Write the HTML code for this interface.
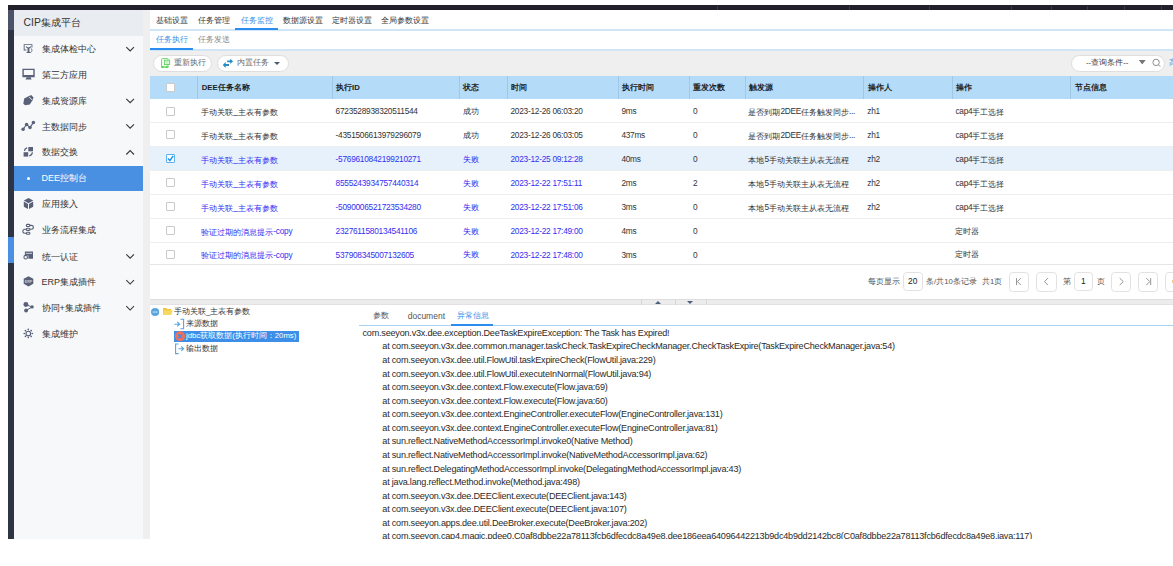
<!DOCTYPE html>
<html><head><meta charset="utf-8"><style>
*{margin:0;padding:0;box-sizing:border-box}
html,body{width:1173px;height:566px;overflow:hidden;background:#fff;font-family:"Liberation Sans",sans-serif;color:#333}
.a{position:absolute;white-space:nowrap}
.si{font-size:9px;line-height:12px;color:#333;left:41.6px}
.chev{left:127px;width:6px;height:6px;border-right:1.2px solid #555;border-bottom:1.2px solid #555;transform:rotate(45deg)}
.chevu{transform:rotate(-135deg)}
.t{font-size:7.75px;line-height:10px;color:#333}
.hd{font-size:7.75px;line-height:10px;color:#222;font-weight:bold}
.L{font-size:8.3px;letter-spacing:-0.26px;position:relative;top:-0.9px}
.cb{width:9px;height:9px;border:1px solid #c9c9c9;background:#fff;border-radius:1px}
.bl{color:#3030f2}
.ex{font-size:9.1px;letter-spacing:-0.22px;line-height:13.57px;color:#2a2a2a}
svg{position:absolute;overflow:visible}
</style></head><body>
<div class="a" style="left:8px;top:5px;width:1165px;height:5px;background:#21202b"></div>
<div class="a" style="left:717px;top:6px;width:1px;height:4px;background:#3a3a46"></div>
<div class="a" style="left:849px;top:6px;width:1px;height:4px;background:#3a3a46"></div>
<div class="a" style="left:929px;top:6px;width:1px;height:4px;background:#3a3a46"></div>
<div class="a" style="left:1011px;top:6px;width:1px;height:4px;background:#3a3a46"></div>
<div class="a" style="left:1051px;top:6px;width:1px;height:4px;background:#3a3a46"></div>
<div class="a" style="left:1087px;top:6px;width:1px;height:4px;background:#3a3a46"></div>
<div class="a" style="left:1124px;top:6px;width:1px;height:4px;background:#3a3a46"></div>
<div class="a" style="left:1161px;top:6px;width:1px;height:4px;background:#3a3a46"></div>
<div class="a" style="left:8px;top:10px;width:6px;height:529px;background:#2f3444"></div>
<div class="a" style="left:8px;top:10px;width:6px;height:20px;background:#4c5268"></div>
<div class="a" style="left:8px;top:237px;width:6px;height:26px;background:#4a8fe2"></div>
<div class="a" style="left:14px;top:10px;width:129px;height:529px;background:#f7f8fa"></div>
<div class="a" style="left:14px;top:10px;width:129px;height:26px;background:#e9ecf0"></div>
<div class="a" style="left:142.6px;top:10px;width:7.4px;height:529px;background:#efefef"></div>
<div class="a" style="left:23.5px;top:16px;font-size:10.4px;line-height:14px;color:#333">CIP集成平台</div>
<div class="a" style="left:14px;top:165.7px;width:128.6px;height:25.4px;background:#4a90e2"></div>
<div class="a" style="left:27.2px;top:176.6px;width:3px;height:3px;border-radius:50%;background:#fff"></div>
<div class="a si" style="top:43.3px">集成体检中心</div>
<div class="a si" style="top:69.2px">第三方应用</div>
<div class="a si" style="top:95.1px">集成资源库</div>
<div class="a si" style="top:120.6px">主数据同步</div>
<div class="a si" style="top:146.1px">数据交换</div>
<div class="a si" style="top:172.1px;color:#fff">DEE控制台</div>
<div class="a si" style="top:198.1px">应用接入</div>
<div class="a si" style="top:224.4px">业务流程集成</div>
<div class="a si" style="top:250.6px">统一认证</div>
<div class="a si" style="top:276.4px">ERP集成插件</div>
<div class="a si" style="top:302.4px">协同+集成插件</div>
<div class="a si" style="top:328.1px">集成维护</div>
<div class="a" style="left:150px;top:10px;width:1023px;height:40px;background:#fff"></div>
<div class="a" style="left:150px;top:29px;width:1023px;height:1.5px;background:#cfe5f8"></div>
<div class="a" style="left:235px;top:28px;width:43px;height:2px;background:#2d8cf0"></div>
<div class="a t" style="left:155.5px;top:16px">基础设置</div>
<div class="a t" style="left:198px;top:16px">任务管理</div>
<div class="a t" style="left:241px;top:16px;color:#3a8ee6">任务监控</div>
<div class="a t" style="left:283px;top:16px">数据源设置</div>
<div class="a t" style="left:332px;top:16px">定时器设置</div>
<div class="a t" style="left:381px;top:16px">全局参数设置</div>
<div class="a" style="left:150px;top:49px;width:1023px;height:1.5px;background:#cfe5f8"></div>
<div class="a" style="left:150px;top:48px;width:43px;height:2px;background:#2d8cf0"></div>
<div class="a t" style="left:155.5px;top:35px;color:#3a8ee6">任务执行</div>
<div class="a t" style="left:198px;top:35px;color:#8a8a8a">任务发送</div>
<div class="a" style="left:150px;top:50.5px;width:1023px;height:25.5px;background:#efefef"></div>
<div class="a" style="left:153.3px;top:55.3px;width:59px;height:16.3px;border:1px solid #dedede;border-radius:9px;background:#fff"></div>
<div class="a t" style="left:174px;top:58px;color:#666">重新执行</div>
<div class="a" style="left:216.5px;top:55.3px;width:72.3px;height:16.3px;border:1px solid #dedede;border-radius:9px;background:#fff"></div>
<div class="a t" style="left:237px;top:58px;color:#666">内置任务</div>
<div class="a" style="left:274px;top:62px;width:0;height:0;border-left:3px solid transparent;border-right:3px solid transparent;border-top:3.5px solid #4a5a70"></div>
<div class="a" style="left:1071px;top:55.3px;width:94.2px;height:16.3px;border:1px solid #dedede;border-radius:9px;background:#fff"></div>
<div class="a t" style="left:1086px;top:58px;color:#3a3a3a">--查询条件--</div>
<div class="a" style="left:1139px;top:60px;width:0;height:0;border-left:3.5px solid transparent;border-right:3.5px solid transparent;border-top:4.5px solid #777"></div>
<div class="a t" style="left:1168.8px;top:58px;color:#3a8ee6;font-size:8.2px">高</div>
<div class="a" style="left:150px;top:76px;width:1023px;height:23.3px;background:#b4dbf8"></div>
<div class="a" style="left:197.4px;top:76px;width:1px;height:23px;background:#9fc7e6"></div>
<div class="a" style="left:331.7px;top:76px;width:1px;height:23px;background:#9fc7e6"></div>
<div class="a" style="left:458.6px;top:76px;width:1px;height:23px;background:#9fc7e6"></div>
<div class="a" style="left:506.6px;top:76px;width:1px;height:23px;background:#9fc7e6"></div>
<div class="a" style="left:617.5px;top:76px;width:1px;height:23px;background:#9fc7e6"></div>
<div class="a" style="left:689px;top:76px;width:1px;height:23px;background:#9fc7e6"></div>
<div class="a" style="left:744.5px;top:76px;width:1px;height:23px;background:#9fc7e6"></div>
<div class="a" style="left:863.4px;top:76px;width:1px;height:23px;background:#9fc7e6"></div>
<div class="a" style="left:951.5px;top:76px;width:1px;height:23px;background:#9fc7e6"></div>
<div class="a" style="left:1070.4px;top:76px;width:1px;height:23px;background:#9fc7e6"></div>
<div class="a cb" style="left:166px;top:82.5px"></div>
<div class="a hd" style="left:201.7px;top:82.5px">DEE任务名称</div>
<div class="a hd" style="left:336.0px;top:82.5px">执行ID</div>
<div class="a hd" style="left:462.9px;top:82.5px">状态</div>
<div class="a hd" style="left:510.9px;top:82.5px">时间</div>
<div class="a hd" style="left:621.8px;top:82.5px">执行时间</div>
<div class="a hd" style="left:693.3px;top:82.5px">重发次数</div>
<div class="a hd" style="left:748.8px;top:82.5px">触发源</div>
<div class="a hd" style="left:867.7px;top:82.5px">操作人</div>
<div class="a hd" style="left:955.8px;top:82.5px">操作</div>
<div class="a hd" style="left:1074.7px;top:82.5px">节点信息</div>
<div class="a" style="left:150px;top:122.20px;width:1023px;height:1px;background:#eeeeee"></div>
<div class="a cb" style="left:166px;top:106.55px"></div>
<div class="a t" style="left:201.3px;top:107.00px">手动关联<span class="L">_</span>主表有参数</div>
<div class="a t" style="left:335.6px;top:107.00px"><span class="L">6723528938320511544</span></div>
<div class="a t" style="left:462.5px;top:107.00px">成功</div>
<div class="a t" style="left:510.5px;top:107.00px"><span class="L">2023-12-26 06:03:20</span></div>
<div class="a t" style="left:621.4px;top:107.00px"><span class="L">9ms</span></div>
<div class="a t" style="left:692.9px;top:107.00px"><span class="L">0</span></div>
<div class="a t" style="left:748.4px;top:107.00px">是否到期<span class="L">2DEE</span>任务触发同步<span class="L">...</span></div>
<div class="a t" style="left:867.3px;top:107.00px"><span class="L">zh1</span></div>
<div class="a t" style="left:955.4px;top:107.00px"><span class="L">cap4</span>手工选择</div>
<div class="a" style="left:150px;top:146.10px;width:1023px;height:1px;background:#eeeeee"></div>
<div class="a cb" style="left:166px;top:130.45px"></div>
<div class="a t" style="left:201.3px;top:130.90px">手动关联<span class="L">_</span>主表有参数</div>
<div class="a t" style="left:335.6px;top:130.90px"><span class="L">-4351506613979296079</span></div>
<div class="a t" style="left:462.5px;top:130.90px">成功</div>
<div class="a t" style="left:510.5px;top:130.90px"><span class="L">2023-12-26 06:03:05</span></div>
<div class="a t" style="left:621.4px;top:130.90px"><span class="L">437ms</span></div>
<div class="a t" style="left:692.9px;top:130.90px"><span class="L">0</span></div>
<div class="a t" style="left:748.4px;top:130.90px">是否到期<span class="L">2DEE</span>任务触发同步<span class="L">...</span></div>
<div class="a t" style="left:867.3px;top:130.90px"><span class="L">zh1</span></div>
<div class="a t" style="left:955.4px;top:130.90px"><span class="L">cap4</span>手工选择</div>
<div class="a" style="left:150px;top:146.50px;width:1023px;height:24.10px;background:#e7f1fc"></div>
<div class="a" style="left:150px;top:170.00px;width:1023px;height:1px;background:#eeeeee"></div>
<div class="a cb" style="left:166px;top:154.35px;border-color:#5ab0f0"></div>
<svg style="left:166px;top:154.35px" width="9" height="9"><path d="M2 4.6 L3.9 6.6 L7.2 1.8" stroke="#1e8fef" stroke-width="1.4" fill="none"/></svg>
<div class="a t bl" style="left:201.3px;top:154.80px">手动关联<span class="L">_</span>主表有参数</div>
<div class="a t bl" style="left:335.6px;top:154.80px"><span class="L">-5769610842199210271</span></div>
<div class="a t bl" style="left:462.5px;top:154.80px">失败</div>
<div class="a t bl" style="left:510.5px;top:154.80px"><span class="L">2023-12-25 09:12:28</span></div>
<div class="a t" style="left:621.4px;top:154.80px"><span class="L">40ms</span></div>
<div class="a t" style="left:692.9px;top:154.80px"><span class="L">0</span></div>
<div class="a t" style="left:748.4px;top:154.80px">本地<span class="L">5</span>手动关联主从表无流程</div>
<div class="a t" style="left:867.3px;top:154.80px"><span class="L">zh2</span></div>
<div class="a t" style="left:955.4px;top:154.80px"><span class="L">cap4</span>手工选择</div>
<div class="a" style="left:150px;top:193.90px;width:1023px;height:1px;background:#eeeeee"></div>
<div class="a cb" style="left:166px;top:178.25px"></div>
<div class="a t bl" style="left:201.3px;top:178.70px">手动关联<span class="L">_</span>主表有参数</div>
<div class="a t bl" style="left:335.6px;top:178.70px"><span class="L">8555243934757440314</span></div>
<div class="a t bl" style="left:462.5px;top:178.70px">失败</div>
<div class="a t bl" style="left:510.5px;top:178.70px"><span class="L">2023-12-22 17:51:11</span></div>
<div class="a t" style="left:621.4px;top:178.70px"><span class="L">2ms</span></div>
<div class="a t" style="left:692.9px;top:178.70px"><span class="L">2</span></div>
<div class="a t" style="left:748.4px;top:178.70px">本地<span class="L">5</span>手动关联主从表无流程</div>
<div class="a t" style="left:867.3px;top:178.70px"><span class="L">zh2</span></div>
<div class="a t" style="left:955.4px;top:178.70px"><span class="L">cap4</span>手工选择</div>
<div class="a" style="left:150px;top:217.80px;width:1023px;height:1px;background:#eeeeee"></div>
<div class="a cb" style="left:166px;top:202.15px"></div>
<div class="a t bl" style="left:201.3px;top:202.60px">手动关联<span class="L">_</span>主表有参数</div>
<div class="a t bl" style="left:335.6px;top:202.60px"><span class="L">-5090006521723534280</span></div>
<div class="a t bl" style="left:462.5px;top:202.60px">失败</div>
<div class="a t bl" style="left:510.5px;top:202.60px"><span class="L">2023-12-22 17:51:06</span></div>
<div class="a t" style="left:621.4px;top:202.60px"><span class="L">3ms</span></div>
<div class="a t" style="left:692.9px;top:202.60px"><span class="L">0</span></div>
<div class="a t" style="left:748.4px;top:202.60px">本地<span class="L">5</span>手动关联主从表无流程</div>
<div class="a t" style="left:867.3px;top:202.60px"><span class="L">zh2</span></div>
<div class="a t" style="left:955.4px;top:202.60px"><span class="L">cap4</span>手工选择</div>
<div class="a" style="left:150px;top:241.70px;width:1023px;height:1px;background:#eeeeee"></div>
<div class="a cb" style="left:166px;top:226.05px"></div>
<div class="a t bl" style="left:201.3px;top:226.50px">验证过期的消息提示<span class="L">-copy</span></div>
<div class="a t bl" style="left:335.6px;top:226.50px"><span class="L">2327611580134541106</span></div>
<div class="a t bl" style="left:462.5px;top:226.50px">失败</div>
<div class="a t bl" style="left:510.5px;top:226.50px"><span class="L">2023-12-22 17:49:00</span></div>
<div class="a t" style="left:621.4px;top:226.50px"><span class="L">4ms</span></div>
<div class="a t" style="left:692.9px;top:226.50px"><span class="L">0</span></div>
<div class="a t" style="left:955.4px;top:226.50px">定时器</div>
<div class="a" style="left:150px;top:263.70px;width:1023px;height:1px;background:#eeeeee"></div>
<div class="a cb" style="left:166px;top:249.95px"></div>
<div class="a t bl" style="left:201.3px;top:250.40px">验证过期的消息提示<span class="L">-copy</span></div>
<div class="a t bl" style="left:335.6px;top:250.40px"><span class="L">537908345007132605</span></div>
<div class="a t bl" style="left:462.5px;top:250.40px">失败</div>
<div class="a t bl" style="left:510.5px;top:250.40px"><span class="L">2023-12-22 17:48:00</span></div>
<div class="a t" style="left:621.4px;top:250.40px"><span class="L">3ms</span></div>
<div class="a t" style="left:692.9px;top:250.40px"><span class="L">0</span></div>
<div class="a t" style="left:955.4px;top:250.40px">定时器</div>
<div class="a" style="left:150px;top:264.5px;width:1023px;height:34.5px;background:#fff"></div>
<div class="a" style="left:150px;top:264px;width:1023px;height:1px;background:#e6e6e6"></div>
<div class="a t" style="left:868px;top:276.8px;color:#555">每页显示</div>
<div class="a" style="left:902.7px;top:272.3px;width:20.0px;height:19.19999999999999px;border:1px solid #e2e2e2;border-radius:3.8px;background:#fff;font-size:8.4px;line-height:17.19999999999999px;text-align:center;color:#222">20</div>
<div class="a t" style="left:926px;top:276.8px;color:#555">条/共10条记录</div>
<div class="a t" style="left:982px;top:276.8px;color:#555">共1页</div>
<div class="a" style="left:1008.5px;top:271.5px;width:20.0px;height:20.80000000000001px;border:1px solid #e2e2e2;border-radius:3.8px;background:#fff;font-size:8.4px;line-height:18.80000000000001px;text-align:center;color:#222"></div>
<div class="a" style="left:1035.5px;top:271.5px;width:21.0px;height:20.80000000000001px;border:1px solid #e2e2e2;border-radius:3.8px;background:#fff;font-size:8.4px;line-height:18.80000000000001px;text-align:center;color:#222"></div>
<div class="a t" style="left:1062.7px;top:276.8px;color:#555">第</div>
<div class="a" style="left:1074px;top:272.3px;width:18.5px;height:19.19999999999999px;border:1px solid #e2e2e2;border-radius:3.8px;background:#fff;font-size:8.4px;line-height:17.19999999999999px;text-align:center;color:#222">1</div>
<div class="a t" style="left:1096.5px;top:276.8px;color:#555">页</div>
<div class="a" style="left:1110.7px;top:271.5px;width:20.799999999999955px;height:20.80000000000001px;border:1px solid #e2e2e2;border-radius:3.8px;background:#fff;font-size:8.4px;line-height:18.80000000000001px;text-align:center;color:#222"></div>
<div class="a" style="left:1138px;top:271.5px;width:20px;height:20.80000000000001px;border:1px solid #e2e2e2;border-radius:3.8px;background:#fff;font-size:8.4px;line-height:18.80000000000001px;text-align:center;color:#222"></div>
<div class="a" style="left:1165.2px;top:271.5px;width:19.799999999999955px;height:20.80000000000001px;border:1px solid #e2e2e2;border-radius:3.8px;background:#fff;font-size:8.4px;line-height:18.80000000000001px;text-align:center;color:#222"></div>
<div class="a" style="left:1171.8px;top:279.5px;width:1.5px;height:3.5px;background:#f3c98f"></div>
<div class="a" style="left:150px;top:299px;width:1023px;height:6px;background:#ececec;border-top:1px solid #dedede;border-bottom:1px solid #e2e2e2"></div>
<div class="a" style="left:641.4px;top:299px;width:1px;height:6px;background:#d6d6d6"></div>
<div class="a" style="left:674.7px;top:299px;width:1px;height:6px;background:#d6d6d6"></div>
<div class="a" style="left:706.3px;top:299px;width:1px;height:6px;background:#d6d6d6"></div>
<div class="a" style="left:654.5px;top:300.5px;width:0;height:0;border-left:3.5px solid transparent;border-right:3.5px solid transparent;border-bottom:3.5px solid #4a5f7e"></div>
<div class="a" style="left:687px;top:300.8px;width:0;height:0;border-left:3.5px solid transparent;border-right:3.5px solid transparent;border-top:3.5px solid #4a5f7e"></div>
<div class="a t" style="left:174px;top:306.8px">手动关联_主表有参数</div>
<div class="a t" style="left:186px;top:318.8px">来源数据</div>
<div class="a" style="left:174px;top:330.7px;width:124.5px;height:11.1px;background:#3d8ee8"></div>
<div class="a t" style="left:186px;top:331.2px;color:#fff">jdbc获取数据(执行时间：20ms)</div>
<div class="a t" style="left:186px;top:343.6px">输出数据</div>
<div class="a" style="left:359.3px;top:324.8px;width:814px;height:1.3px;background:#a9d2f5"></div>
<div class="a" style="left:450.8px;top:324.2px;width:42.3px;height:2px;background:#2d8cf0"></div>
<div class="a t" style="left:373.2px;top:311.2px;color:#555">参数</div>
<div class="a t" style="left:407.7px;top:311.2px;color:#555;font-size:8.5px;-webkit-text-stroke:0">document</div>
<div class="a t" style="left:456.8px;top:311.2px;color:#3a8ee6">异常信息</div>
<div class="a" style="left:351px;top:326px;width:822px;height:213px;overflow:hidden"><div class="a ex" style="left:11.5px;top:0.80px">com.seeyon.v3x.dee.exception.DeeTaskExpireException: The Task has Expired!</div><div class="a ex" style="left:31.3px;top:14.37px">at com.seeyon.v3x.dee.common.manager.taskCheck.TaskExpireCheckManager.CheckTaskExpire(TaskExpireCheckManager.java:54)</div><div class="a ex" style="left:31.3px;top:27.94px">at com.seeyon.v3x.dee.util.FlowUtil.taskExpireCheck(FlowUtil.java:229)</div><div class="a ex" style="left:31.3px;top:41.51px">at com.seeyon.v3x.dee.util.FlowUtil.executeInNormal(FlowUtil.java:94)</div><div class="a ex" style="left:31.3px;top:55.08px">at com.seeyon.v3x.dee.context.Flow.execute(Flow.java:69)</div><div class="a ex" style="left:31.3px;top:68.65px">at com.seeyon.v3x.dee.context.Flow.execute(Flow.java:60)</div><div class="a ex" style="left:31.3px;top:82.22px">at com.seeyon.v3x.dee.context.EngineController.executeFlow(EngineController.java:131)</div><div class="a ex" style="left:31.3px;top:95.79px">at com.seeyon.v3x.dee.context.EngineController.executeFlow(EngineController.java:81)</div><div class="a ex" style="left:31.3px;top:109.36px">at sun.reflect.NativeMethodAccessorImpl.invoke0(Native Method)</div><div class="a ex" style="left:31.3px;top:122.93px">at sun.reflect.NativeMethodAccessorImpl.invoke(NativeMethodAccessorImpl.java:62)</div><div class="a ex" style="left:31.3px;top:136.50px">at sun.reflect.DelegatingMethodAccessorImpl.invoke(DelegatingMethodAccessorImpl.java:43)</div><div class="a ex" style="left:31.3px;top:150.07px">at java.lang.reflect.Method.invoke(Method.java:498)</div><div class="a ex" style="left:31.3px;top:163.64px">at com.seeyon.v3x.dee.DEEClient.execute(DEEClient.java:143)</div><div class="a ex" style="left:31.3px;top:177.21px">at com.seeyon.v3x.dee.DEEClient.execute(DEEClient.java:107)</div><div class="a ex" style="left:31.3px;top:190.78px">at com.seeyon.apps.dee.util.DeeBroker.execute(DeeBroker.java:202)</div><div class="a ex" style="left:31.3px;top:204.35px">at com.seeyon.cap4.magic.pdee0.C0af8dbbe22a78113fcb6dfecdc8a49e8.dee186eea64096442213b9dc4b9dd2142bc8(C0af8dbbe22a78113fcb6dfecdc8a49e8.java:117)</div></div>
<svg style="left:0;top:0" width="1173" height="566"><path d="M126.3 47.10 L130.15 50.95 L134 47.10" stroke="#3a3a3a" stroke-width="1.15" fill="none"/><path d="M126.3 98.90 L130.15 102.75 L134 98.90" stroke="#3a3a3a" stroke-width="1.15" fill="none"/><path d="M126.3 124.40 L130.15 128.25 L134 124.40" stroke="#3a3a3a" stroke-width="1.15" fill="none"/><path d="M126.3 154.50 L130.15 150.65 L134 154.50" stroke="#3a3a3a" stroke-width="1.15" fill="none"/><path d="M126.3 254.40 L130.15 258.25 L134 254.40" stroke="#3a3a3a" stroke-width="1.15" fill="none"/><path d="M126.3 280.20 L130.15 284.05 L134 280.20" stroke="#3a3a3a" stroke-width="1.15" fill="none"/><path d="M126.3 306.20 L130.15 310.05 L134 306.20" stroke="#3a3a3a" stroke-width="1.15" fill="none"/>
<g fill="#596179" stroke="none">
 <path d="M23.7 44.2 H32.4 V47.4 H31.5 V45.1 H24.6 V49.6 H26.4 V50.5 H23.7 Z"/>
 <path d="M26 46.3 L28.5 47.6 L31 46.3 L31.3 47 L29.4 48.4 V51.8 L30.6 52.1 V53 H26.6 V52.1 L27.6 51.8 V48.4 L25.7 47 Z"/>
 <path d="M30.6 48 A2.6 2.6 0 0 1 30.6 52.6" fill="none" stroke="#596179" stroke-width="0.8"/>
 <path d="M22.4 68.8 H34.7 V77.3 H22.4 Z M23.8 70 V75.1 H33.3 V70 Z" fill-rule="evenodd"/>
 <path d="M26.6 77.2 H30.6 L31.6 79.6 H25.5 Z"/>
 <path d="M23.3 103.8 L24.2 98.6 L28.6 96.2 L31.2 95 L33.5 97.4 L32.5 100.3 L29.8 104.6 L25.2 105.2 Z"/>
</g>
<path d="M29.2 97.0 L32.0 99.9" stroke="#f7f8fa" stroke-width="0.9"/>
<polyline points="23.1,129.3 26.6,124.4 30,127.6 33.4,122.4" fill="none" stroke="#596179" stroke-width="1.1"/>
<g fill="#596179"><circle cx="23.1" cy="129.3" r="1.75"/><circle cx="26.6" cy="124.4" r="1.75"/><circle cx="30" cy="127.6" r="1.75"/><circle cx="33.4" cy="122.4" r="1.75"/></g>
<g fill="#596179">
 <rect x="28.3" y="147" width="4.7" height="4.3"/><rect x="23.6" y="152.2" width="4.6" height="4.4"/>
 <path d="M27 147.2 Q24.2 147.6 23.9 151 L25.1 151 Q25.4 148.8 27.2 148.4 Z"/>
 <path d="M29.2 156.5 Q32.6 156 33 152.3 L31.8 152.3 Q31.5 154.8 29.2 155.3 Z"/>
 <path d="M28.5 198 L33.2 200.6 L28.5 203.2 L23.8 200.6 Z"/>
 <path d="M23.8 201.6 L28 203.9 V209.1 L23.8 206.8 Z"/>
 <path d="M29 203.9 L33.2 201.6 V206.8 L29 209.1 Z"/>
</g>
<g fill="none" stroke="#596179" stroke-width="1.1">
 <rect x="26.3" y="224.4" width="3.6" height="2.1" rx="1"/>
 <rect x="26.3" y="228.3" width="3.6" height="2.1" rx="1"/>
 <rect x="26.3" y="232.2" width="3.6" height="2.1" rx="1"/>
 <path d="M29.9 225.4 H31.4 A1.95 1.95 0 0 1 31.4 229.3 H29.9"/>
 <path d="M26.3 229.3 H24.8 A1.95 1.95 0 0 0 24.8 233.2 H26.3"/>
</g>
<g fill="#596179">
 <path d="M24.9 251.4 H33 V258.7 H28.4 V255.6 H24.9 Z"/>
</g>
<rect x="25.9" y="252.9" width="6.2" height="0.7" fill="#f7f8fa"/>
<circle cx="25.7" cy="257.2" r="1.8" fill="#f7f8fa" stroke="#596179" stroke-width="1.1"/>
<path d="M28.5 276.2 L33.3 278.8 V283.8 L28.5 286.4 L23.7 283.8 V278.8 Z" fill="#596179"/>
<text x="28.5" y="282.6" font-size="3.6" font-weight="bold" fill="#c9ccd6" text-anchor="middle" font-family="Liberation Sans">ERP</text>
<path d="M25.9 304.6 L32.1 307 L26.1 310.4" fill="none" stroke="#596179" stroke-width="1"/>
<g fill="#596179">
 <circle cx="25.9" cy="304.5" r="2.45"/><circle cx="26.1" cy="310.5" r="1.95"/><circle cx="32.1" cy="306.9" r="1.7"/>
</g>
<g fill="none" stroke="#596179" stroke-width="1.1">
 <circle cx="28.3" cy="333.5" r="2.3"/>
</g>
<g stroke="#596179" stroke-width="1.6" stroke-linecap="round">
 <path d="M28.3 329.4 V329.6 M28.3 337.4 V337.6 M24.2 333.5 H24.4 M32.2 333.5 H32.4 M25.4 330.6 L25.5 330.7 M31.1 336.3 L31.2 336.4 M31.2 330.6 L31.1 330.7 M25.5 336.3 L25.4 336.4"/>
</g>
<!-- toolbar icons -->
<rect x="161.6" y="58.6" width="6.4" height="9" rx="0.7" fill="#fff" stroke="#6ad66a" stroke-width="1"/>
<rect x="161.1" y="65.9" width="7.4" height="2.1" fill="#8fe08f"/>
<circle cx="162.6" cy="66.9" r="0.95" fill="#4ccf4c"/><circle cx="166.9" cy="66.9" r="0.95" fill="#4ccf4c"/>
<rect x="164.4" y="60.2" width="5.2" height="4.3" fill="#fff" stroke="#6ad66a" stroke-width="1"/>
<path d="M165.4 61.7 H168.6 M165.4 63.1 H168.6" stroke="#8fe08f" stroke-width="0.8"/>
<g fill="#2a8bc2">
 <path d="M227.2 60.4 H230.2 V58.8 L233.1 61.3 L230.2 63.9 V62.2 H227.2 Z"/>
 <path d="M229 64.1 H225.7 V62 L222.8 65 L225.7 67.9 V66 H229 Z"/>
</g>
<path d="M1139 59.9 H1145.7 L1142.35 64.2 Z" fill="#777"/>
<circle cx="1156.1" cy="62.4" r="3.2" fill="none" stroke="#8a8a8a" stroke-width="0.95"/>
<path d="M1158.4 64.7 L1160.3 66.6" stroke="#8a8a8a" stroke-width="1"/>
<!-- pagination glyphs -->
<g fill="none" stroke="#8a8a8a" stroke-width="0.9">
 <path d="M1016.5 278.1 V285.1 M1020.9 278.1 L1017.4 281.6 L1020.9 285.1"/>
 <path d="M1048 278.1 L1044.5 281.6 L1048 285.1"/>
 <path d="M1119.7 278.1 L1123.3 281.6 L1119.7 285.1"/>
 <path d="M1150.7 278.1 V285.1 M1146.3 278.1 L1149.8 281.6 L1146.3 285.1"/>
</g>
<!-- tree icons -->
<circle cx="155.1" cy="312" r="4.1" fill="#5ca5dc"/>
<rect x="152.7" y="311.4" width="4.8" height="1.3" fill="#b5d7f2"/>
<path d="M163 308 H166.5 L167.3 309 H171.2 V314.8 H163 Z" fill="#f3c63f"/>
<path d="M163.6 310.6 H172.8 L171.2 314.8 H163 Z" fill="#f8d865"/>
<g fill="none" stroke="#5ba3dc" stroke-width="1.1">
 <path d="M180.4 319.2 H183.6 V328.8 H180.4"/>
 <path d="M174.4 324.2 H179.6 M177.3 322 L179.6 324.2 L177.3 326.4"/>
 <path d="M178.6 344 H175.6 V353.6 H178.6"/>
 <path d="M178.4 348.7 H183.6 M181.3 346.5 L183.6 348.7 L181.3 350.9"/>
</g>
<circle cx="180.1" cy="336.3" r="5" fill="#f2705a"/>
<path d="M178.1 334.3 L182.1 338.3 M182.1 334.3 L178.1 338.3" stroke="#3d8ee8" stroke-width="1.3"/>
</svg>
</body></html>
